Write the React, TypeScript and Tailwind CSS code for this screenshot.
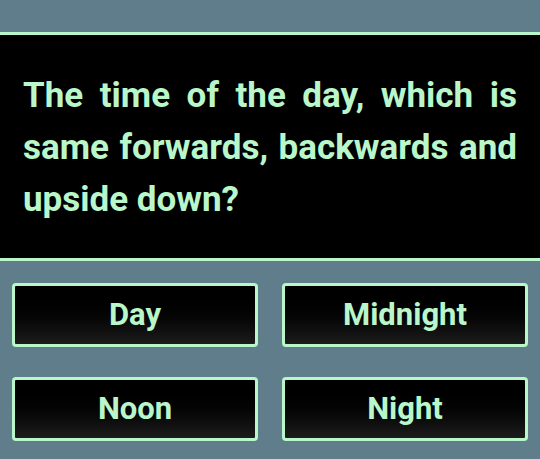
export default function App() {
    const answers = ["Day", "Midnight", "Noon", "Night"];

    return (
        <div className="h-[459px] w-[540px] bg-[#607d8b] font-['Roboto',sans-serif] overflow-hidden">
            <div className="pt-[32px]">
                {/* Question */}
                <div className="border-y-[3px] border-[#b9f6ca] bg-black px-[23px] pt-[35px] pb-[32px]">
                    <p className="text-[35px] leading-[52px] font-bold text-[#b9f6ca] text-justify">
                        The time of the day, which is same forwards, backwards and upside down?
                    </p>
                </div>

                {/* Answers */}
                <div className="grid grid-cols-2 gap-x-[24px] gap-y-[30px] px-[12px] pt-[22px]">
                    {answers.map((a) => (
                        <button
                            key={a}
                            className="h-[64px] rounded-[4px] border-[3px] border-[#b9f6ca] bg-gradient-to-b from-black to-[#1c1c1c] text-[31px] font-bold text-[#b9f6ca]"
                        >
                            {a}
                        </button>
                    ))}
                </div>
            </div>
        </div>
    );
}
